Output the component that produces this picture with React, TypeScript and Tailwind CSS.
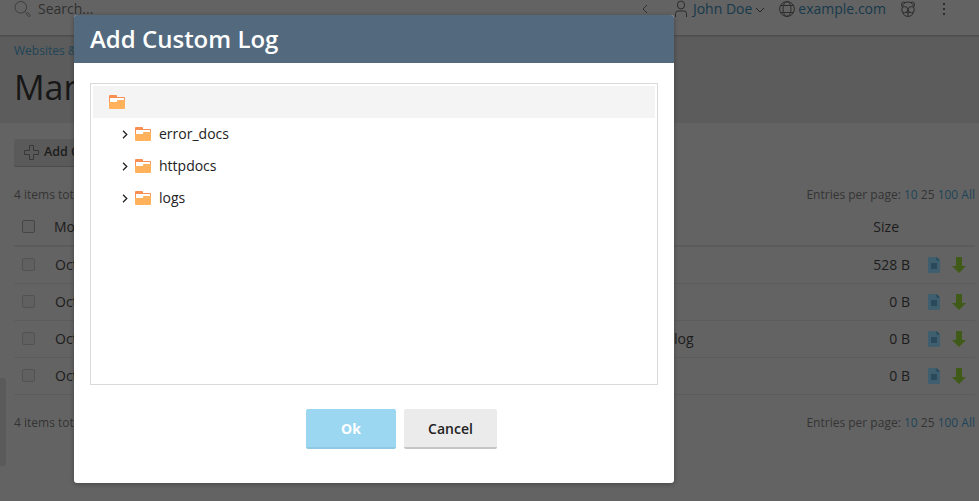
import React from "react";

const SearchIcon = () => (
  <svg width="18" height="18" viewBox="0 0 18 18" fill="none" stroke="#3d3d3d" className="shrink-0">
    <circle cx="6.8" cy="7.3" r="5.8" />
    <path d="M11 11.5l1.200 1M12 13.800l1.400-1.400 2.500 2.500q.6.7 0 1.300-.7.7-1.400 0z" />
  </svg>
);

const UserIcon = () => (
  <svg width="14" height="17" viewBox="0 0 14 17" fill="none" stroke="#2c2c2c">
    <ellipse cx="7" cy="5" rx="3.6" ry="4" />
    <path d="M1.500 17v-3.500q0-2.500 2.500-2.500h6q2.500 0 2.500 2.500V17" />
  </svg>
);

const GlobeIcon = () => (
  <svg width="16" height="16" viewBox="0 0 16 16" fill="none" stroke="#2c2c2c">
    <circle cx="8" cy="8" r="7.400" />
    <ellipse cx="8" cy="8" rx="4" ry="7.400" />
    <path d="M2 4.500h12M2 11.500h12" />
  </svg>
);

const PandaIcon = () => (
  <svg width="14" height="16" viewBox="0 0 14 16" fill="none" stroke="#2c2c2c">
    <path d="M1.200 6Q-.3 2.500 1.200 1.500 2.500.6 4 1.600 7 .3 10 1.600 11.500.6 12.800 1.500 14.300 2.500 12.800 6" />
    <path d="M1.500 5.500Q2.200 3 4 1.600M12.500 5.500Q11.800 3 10 1.600" />
    <circle cx="3.700" cy="8.700" r="3.100" />
    <circle cx="10.300" cy="8.700" r="3.100" />
    <path d="M1.800 11.300Q2.500 15.400 7 15.400T12.200 11.300M5.500 11.200h3L7 12.700zM7 12.700V15" />
  </svg>
);

const Folder = () => (
  <svg width="16" height="14" viewBox="0 0 16 14" className="shrink-0">
    <path d="M0 1q0-1 1-1h6q1 0 1 1v1h7q1 0 1 1v4H0z" fill="#f98f52" />
    <path d="M1 3h14v4H1z" fill="#fff" />
    <path d="M0 7h7.500q.5 0 .5-.5V6q0-1 1-1h7v8q0 1-1 1H1q-1 0-1-1z" fill="#ffb15c" />
  </svg>
);

const FileIcon = () => (
  <svg width="12" height="16" viewBox="0 0 12 16">
    <path d="M1 0h7.500L12 3.500V15q0 1-1 1H1q-1 0-1-1V1q0-1 1-1z" fill="#3f5f6e" />
    <path d="M8.500 0L12 3.500H8.500z" fill="#20495c" />
    <path d="M3 6h6v6H3z" fill="#284a5b" />
  </svg>
);

const DownIcon = () => (
  <svg width="14" height="16" viewBox="0 0 14 16">
    <path d="M4 0h6v9h4l-7 7-7-7h4z" fill="#405a18" />
  </svg>
);

const Checkbox = ({ strong = false }: { strong?: boolean }) => (
  <span
    className={`ml-2 mt-px block h-[13px] w-[13px] shrink-0 rounded-[2px] border bg-[#606060] ${
      strong ? "border-[#454545]" : "border-[#525252]"
    }`}
  />
);

const ListInfo = () => (
  <div className="flex h-5 items-center justify-between pr-[4px] text-[12px] leading-5 text-[#343434]">
    <span>4 items total</span>
    <span>
      Entries per page: <span className="text-[#204558]">10</span> <span>25</span>{" "}
      <span className="text-[#204558]">100</span> <span className="text-[#204558]">All</span>
    </span>
  </div>
);

const rows = [
  { size: "528 B", name: "" },
  { size: "0 B", name: "" },
  { size: "0 B", name: "log" },
  { size: "0 B", name: "" },
];

const folders = ["error_docs", "httpdocs", "logs"];

export default function App() {
  return (
    <div className="relative h-[501px] w-[979px] overflow-hidden bg-[#636363] font-['Open_Sans',sans-serif] text-[14px] text-[#1c1c1c]">
      <header className="flex h-[35px] items-start justify-between pl-[14px] pr-[34px]">
        <div className="flex gap-[6px] text-[#303030]">
          <SearchIcon />
          <span className="leading-[18px]">Search...</span>
        </div>
        <div className="flex leading-[18px] text-[#17394b]">
          <svg width="6" height="10" viewBox="0 0 6 10" fill="none" stroke="#303030" className="mr-[26px] mt-1">
            <path d="M5 1L1 5l4 4" />
          </svg>
          <UserIcon />
          <span className="ml-[5px]">John Doe</span>
          <svg width="10" height="6" viewBox="0 0 10 6" fill="none" stroke="#242424" className="ml-[3px] mt-[7px]">
            <path d="M1 1l4 4 4-4" />
          </svg>
          <span className="ml-[14px] mt-[1px]"><GlobeIcon /></span>
          <span className="ml-[3px]">example.com</span>
          <span className="ml-[15px] mt-px"><PandaIcon /></span>
          <svg width="2" height="13" viewBox="0 0 2 13" fill="#2c2c2c" className="ml-[28px] mt-[3px]">
            <path d="M0 0h2v2H0zM0 5h2v2H0zM0 10h2v2H0z" />
          </svg>
        </div>
      </header>

      <section className="h-[88px] border-t border-[#4d4d4d] bg-[#5c5c5c] pl-[14px] shadow-[inset_0_1px_1px_#555]">
        <p className="pt-[5px] text-[12px] leading-5 text-[#204558]">Websites &amp; D</p>
        <h1 className="mt-[6px] text-[34px] leading-10 text-[#171717]">Mana</h1>
      </section>

      <main className="pl-[14px]">
        <div className="pt-4">
          <button className="flex h-7 w-[130px] items-center rounded-[2px] border-b border-[#4b4b4b] bg-[#5a5a5a] pl-[10px] text-[12.5px] font-semibold">
            <svg width="15" height="15" viewBox="0 0 15 15" fill="none" stroke="#373737" className="mr-[5px]">
              <path d="M5.500.5h4v5h5v4h-5v5h-4v-5h-5v-4h5z" />
            </svg>
            Add C
          </button>
        </div>
        <div className="mt-[18px]"><ListInfo /></div>

        <div className="mr-[4px] mt-1 flex h-[38px] items-center border-b-2 border-[#5b5b5b] pb-[2px]">
          <Checkbox strong />
          <span className="ml-[19px] grow">Mod</span>
          <span className="mr-[76px]">Size</span>
        </div>
        {rows.map((row, i) => (
          <div key={i} className="mr-[4px] flex h-[37px] items-center border-b border-[#5c5c5c] pb-[2px]">
            <Checkbox />
            <span className="ml-[20px] w-[619px]">Oct</span>
            <span>{row.name}</span>
            <span className="ml-auto mr-[18px]">{row.size}</span>
            <span className="mr-[9px] flex gap-3 pt-[2px]">
              <FileIcon />
              <DownIcon />
            </span>
          </div>
        ))}
        <div className="mt-[18px]"><ListInfo /></div>
      </main>

      <div className="absolute left-0 top-[378px] h-[88px] w-[6px] rounded-r-[3px] bg-[#5a5a5a]" />

      <div role="dialog" className="absolute left-[74px] top-[15px] flex h-[468px] w-[600px] flex-col overflow-hidden rounded-[3px] bg-white shadow-[0_1px_5px_rgba(0,0,0,0.3)]">
        <h2 className="h-12 bg-[#53697e] px-4 text-[24px] font-semibold leading-[48px] text-white">Add Custom Log</h2>
        <div className="mx-4 mt-5 h-[302px] border border-[#dadada] p-[2px] text-[#222]">
          <div className="flex h-8 items-center bg-[#f4f4f4] pl-4"><Folder /></div>
          {folders.map((name) => (
            <div key={name} className="flex h-8 items-center pl-[29px]">
              <svg width="6" height="9" viewBox="0 0 6 9" fill="none" stroke="#222" strokeWidth="1.300" className="mr-[7px]">
                <path d="M1 .7l3.800 3.800L1 8.300" />
              </svg>
              <Folder />
              <span className="ml-2 pb-[2px]">{name}</span>
            </div>
          ))}
        </div>
        <div className="mt-6 flex justify-center gap-2 pl-[55px] text-[14px] font-semibold">
          <button className="h-10 w-[90px] rounded-[2px] border-b-2 border-[#91c8e2] bg-[#9bd7f1] font-bold text-white">Ok</button>
          <button className="h-10 w-[93px] rounded-[2px] border-b-2 border-[#c5c5c5] bg-[#ebebeb] text-[#222]">Cancel</button>
        </div>
      </div>
    </div>
  );
}
